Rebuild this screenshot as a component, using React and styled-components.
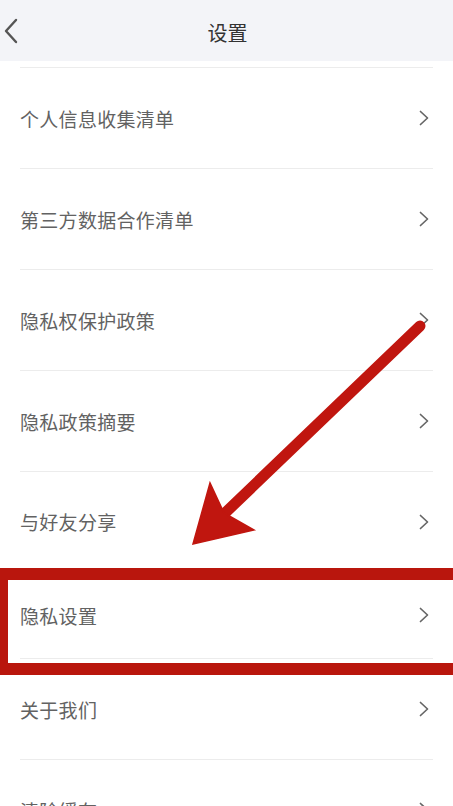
import styled, {createGlobalStyle, css} from 'styled-components';

const GlobalStyle = createGlobalStyle`
    html, body {
        margin: 0;
        padding: 0;
        background: #ffffff;
        font-family: "Noto Sans CJK SC", "Noto Sans", sans-serif;
    }
`

const rows = [
    {label: '个人信息收集清单', height: 101},
    {label: '第三方数据合作清单', height: 101},
    {label: '隐私权保护政策', height: 101},
    {label: '隐私政策摘要', height: 101},
    {label: '与好友分享', height: 100},
    {label: '隐私设置', height: 87, marked: true},
    {label: '关于我们', height: 101},
    {label: '清除缓存', height: 101},
];

function App () {
    return (
        <Page>
            <GlobalStyle />
            <Header>
                <BackButton>
                    <svg width="16" height="28" viewBox="0 0 16 28">
                        <path d="M13 3 L3 14 L13 25" fill="none" stroke="#555" strokeWidth="2.4" strokeLinecap="round" strokeLinejoin="round"/>
                    </svg>
                </BackButton>
                <Title>设置</Title>
            </Header>
            <List>
                {rows.map(r => <Row key={r.label} label={r.label} height={r.height} marked={r.marked}/>)}
            </List>
            <Pointer width="453" height="806" viewBox="0 0 453 806">
                <line x1="420" y1="326" x2="224" y2="514" stroke="#c0160f" strokeWidth="11" strokeLinecap="round"/>
                <polygon points="193,544 210,483 224,513 254,530" fill="#c0160f" stroke="#c0160f" strokeWidth="1.5" strokeLinejoin="miter"/>
            </Pointer>
        </Page>
    );
}

function Row ({label, height, marked}) {
    return (
        <RowWrapper $marked={marked}>
            <RowInner $height={height}>
                <RowLabel>{label}</RowLabel>
                <svg width="12" height="16" viewBox="0 0 12 16">
                    <path d="M2.5 1.5 L9.5 8 L2.5 14.5" fill="none" stroke="#666" strokeWidth="1.7" strokeLinecap="round" strokeLinejoin="round"/>
                </svg>
            </RowInner>
        </RowWrapper>
    );
}

const Page = styled.div`
    position: relative;
    width: 453px;
    height: 806px;
    overflow: hidden;
    background: #ffffff;
`

const Header = styled.div`
    position: relative;
    height: 61px;
    background: #f3f4f8;
    display: flex;
    align-items: center;
    justify-content: center;
`

const BackButton = styled.div`
    position: absolute;
    left: 3px;
    top: 17px;
    display: flex;
`

const Title = styled.div`
    font-size: 20px;
    color: #333;
    margin-top: 4px;
    margin-left: 2px;
`

const List = styled.div`
    padding-top: 6px;
    background: #ffffff;
    border-radius: 6px 6px 0 0;
`

const RowWrapper = styled.div`
    position: relative;
    ${p => p.$marked && css`
        &::after {
            content: "";
            position: absolute;
            top: -3px;
            bottom: -17px;
            left: -4px;
            right: -20px;
            border: 12px solid #b9160d;
            pointer-events: none;
            z-index: 1;
        }
    `}
`

const RowInner = styled.div`
    box-sizing: border-box;
    height: ${p => p.$height}px;
    margin: 0 20px;
    padding-right: 3px;
    border-top: 1px solid #ececec;
    display: flex;
    align-items: center;
    justify-content: space-between;
`

const RowLabel = styled.div`
    font-size: 19px;
    color: #626262;
    letter-spacing: 0.3px;
`

const Pointer = styled.svg`
    position: absolute;
    left: 0;
    top: 0;
    pointer-events: none;
    z-index: 2;
`

export default App;
